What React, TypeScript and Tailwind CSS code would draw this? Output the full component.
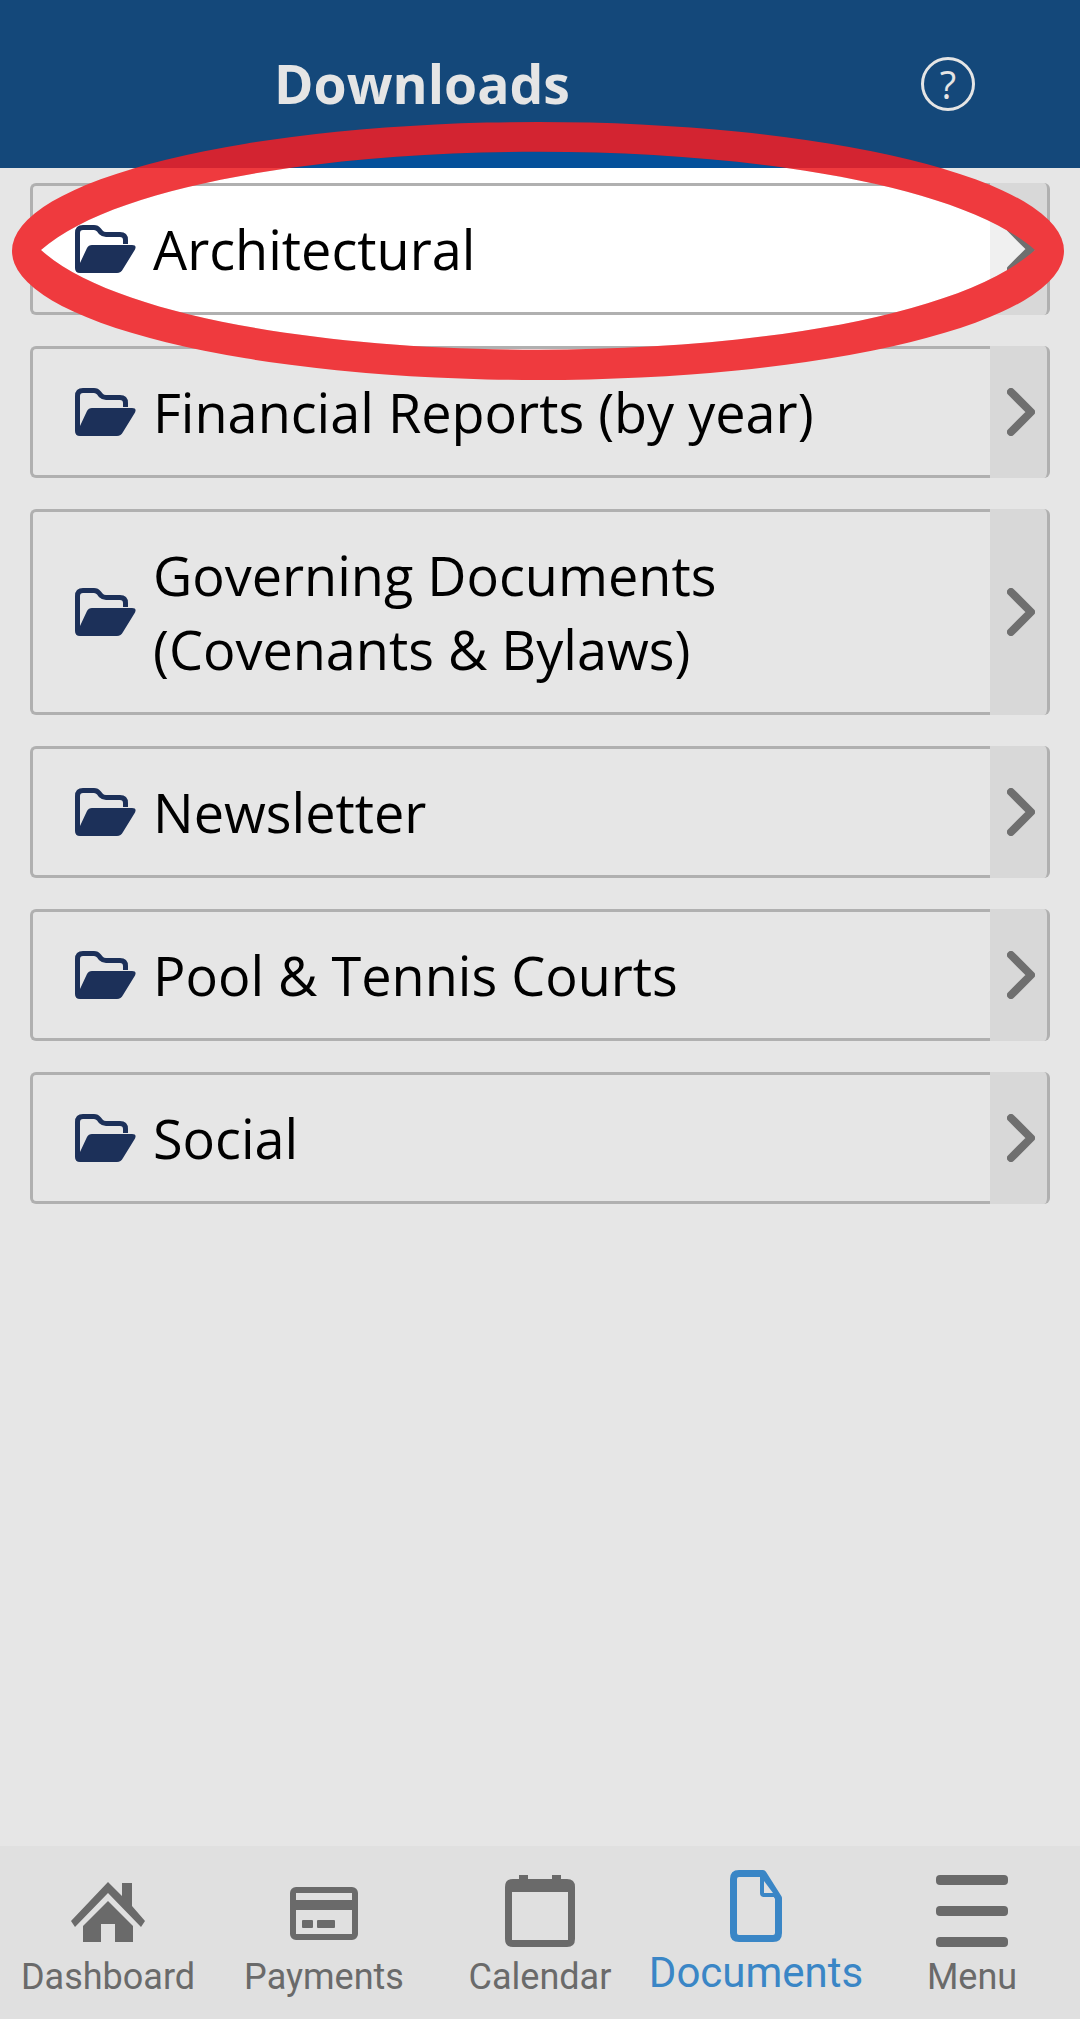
const LENS = "M41 250 C189 119 887 119 1035 250 C887 383 189 383 41 250 Z";
const RING =
  "M12 251 A526 129 0 1 1 1064 251 A526 129 0 1 1 12 251 Z " + LENS;

const folders = [
  ["Architectural"],
  ["Financial Reports (by year)"],
  ["Governing Documents", "(Covenants & Bylaws)"],
  ["Newsletter"],
  ["Pool & Tennis Courts"],
  ["Social"],
];

function FolderIcon() {
  return (
    <svg viewBox="0 0 61 48" className="w-[61px] h-[48px] shrink-0">
      <path
        d="M2.500 42V8Q2.500 2.500 8 2.500H19Q22 2.500 24 5L26 7.500Q28 9.500 31 9.500H45Q50.500 9.500 50.500 15V19"
        fill="none"
        stroke="#1c3059"
        strokeWidth="5"
      />
      <path
        d="M17 20H57Q62 20 60 24.500L48 44Q46 48 42 48H5Q0 48 0 43V38H5L12 23Q13.500 20 17 20Z"
        fill="#1c3059"
      />
    </svg>
  );
}

function Chevron() {
  return (
    <svg viewBox="0 0 28 48" className="w-[28px] h-[48px]">
      <path
        d="M4 4L24 24L4 44"
        fill="none"
        stroke="#6f6f6f"
        strokeWidth="8"
        strokeLinecap="round"
        strokeLinejoin="round"
      />
    </svg>
  );
}

function FolderRow({ lines }: { lines: string[] }) {
  return (
    <div className="flex">
      <div className="flex-1 flex items-center gap-[17px] pl-[42px] py-[26px] min-h-[132px] border-y-[3px] border-l-[3px] border-[#b0b0b0] rounded-l-md">
        <FolderIcon />
        <div className="text-[54px] leading-[74px] text-black font-['Open_Sans',sans-serif]">
          {lines.map((l) => (
            <div key={l}>{l}</div>
          ))}
        </div>
      </div>
      <div className="w-[60px] flex items-center justify-center pl-[5px] bg-black/[0.06] border-r-[3px] border-[#b0b0b0] rounded-r-md">
        <Chevron />
      </div>
    </div>
  );
}

const tabs = [
  {
    label: "Dashboard",
    icon: (
      <svg viewBox="0 0 74 60" className="w-[74px] h-[60px] mt-[12px]" fill="#6a6a6a">
        <path d="M37 0L51 14V1H61V24L74 39L70 45L37 11L4 45L0 39Z" />
        <path d="M37 19L62 44V60H44V42H30V60H12V44Z" />
      </svg>
    ),
  },
  {
    label: "Payments",
    icon: (
      <svg viewBox="0 0 68 53" className="w-[68px] h-[53px] mt-[17px]">
        <rect x="3" y="3" width="62" height="47" rx="3" fill="none" stroke="#6a6a6a" strokeWidth="6" />
        <rect x="3" y="13" width="62" height="10" fill="#6a6a6a" />
        <rect x="12" y="33" width="11" height="8" rx="1" fill="#6a6a6a" />
        <rect x="27" y="33" width="18" height="8" rx="1" fill="#6a6a6a" />
      </svg>
    ),
  },
  {
    label: "Calendar",
    icon: (
      <svg viewBox="0 0 70 72" className="w-[70px] h-[72px] mt-[5px]">
        <rect x="14" y="0" width="9" height="8" fill="#6a6a6a" />
        <rect x="47" y="0" width="9" height="8" fill="#6a6a6a" />
        <path
          fillRule="evenodd"
          d="M8 4H62Q70 4 70 12V64Q70 72 62 72H8Q0 72 0 64V12Q0 4 8 4ZM7 17V65H63V17Z"
          fill="#6a6a6a"
        />
      </svg>
    ),
  },
  {
    label: "Documents",
    active: true,
    icon: (
      <svg viewBox="0 0 52 72" className="w-[52px] h-[72px]">
        <path
          d="M9 3.500H33L48.500 28V63Q48.500 68.500 43 68.500H9Q3.500 68.500 3.500 63V9Q3.500 3.500 9 3.500Z"
          fill="none"
          stroke="#3a86c6"
          strokeWidth="7"
          strokeLinejoin="round"
        />
        <path d="M30 4V23Q30 27 34 27H49L45 20L33 4Z" fill="#3a86c6" />
        <path d="M34 11V23H43Z" fill="#e0e0e0" />
      </svg>
    ),
  },
  {
    label: "Menu",
    icon: (
      <svg viewBox="0 0 72 72" className="w-[72px] h-[72px] mt-[5px]" fill="#6a6a6a">
        <rect x="0" y="0" width="72" height="10" rx="4" />
        <rect x="0" y="31" width="72" height="10" rx="4" />
        <rect x="0" y="62" width="72" height="10" rx="4" />
      </svg>
    ),
  },
];

export default function App() {
  return (
    <div className="relative h-[2019px] w-[1080px] overflow-hidden flex flex-col bg-[#e6e6e6] font-['Open_Sans',sans-serif]">
      <header className="h-[168px] shrink-0 bg-[#14487a] flex items-center pl-[274px] pr-[105px] justify-between">
        <h1 className="text-[53.5px] leading-[68px] font-bold text-[#e5e5e5]">Downloads</h1>
        <div className="w-[54px] h-[54px] rounded-full border-[3px] border-[#e5e5e5] flex items-center justify-center text-[#e5e5e5] text-[38px] leading-none font-normal">
          ?
        </div>
      </header>

      {/* white highlight sits under the rows, ring goes on top */}
      <svg viewBox="0 0 1080 2019" className="absolute top-0 left-0 w-[1080px] h-[2019px] z-10">
        <defs>
          <clipPath id="lens">
            <path d={LENS} />
          </clipPath>
        </defs>
        <g clipPath="url(#lens)">
          <rect x="0" y="100" width="1080" height="68" fill="#04509a" />
          <rect x="0" y="168" width="1080" height="240" fill="#ffffff" />
        </g>
      </svg>

      <main className="relative z-20 flex-1 flex flex-col gap-[31px] pt-[15px] pl-[30px] pr-[30px]">
        {folders.map((lines) => (
          <FolderRow key={lines[0]} lines={lines} />
        ))}
      </main>

      <svg viewBox="0 0 1080 2019" className="absolute top-0 left-0 w-[1080px] h-[2019px] z-30 pointer-events-none">
        <defs>
          <clipPath id="top">
            <rect x="0" y="0" width="1080" height="168" />
          </clipPath>
          <clipPath id="bottom">
            <rect x="0" y="168" width="1080" height="400" />
          </clipPath>
        </defs>
        <path d={RING} fillRule="evenodd" fill="#d32431" clipPath="url(#top)" />
        <path d={RING} fillRule="evenodd" fill="#ef3a3e" clipPath="url(#bottom)" />
      </svg>

      <nav className="h-[173px] shrink-0 bg-[#e0e0e0] grid grid-cols-5 pt-[24px] font-['Roboto',sans-serif]">
        {tabs.map((t) => (
          <div key={t.label} className="flex flex-col items-center">
            <div className="h-[80px] flex items-start justify-center">{t.icon}</div>
            <div
              className={
                t.active
                  ? "text-[42px] leading-[46px] text-[#3a86c6] whitespace-nowrap"
                  : "text-[36px] leading-[46px] mt-[4px] text-[#6a6a6a] whitespace-nowrap"
              }
            >
              {t.label}
            </div>
          </div>
        ))}
      </nav>
    </div>
  );
}
